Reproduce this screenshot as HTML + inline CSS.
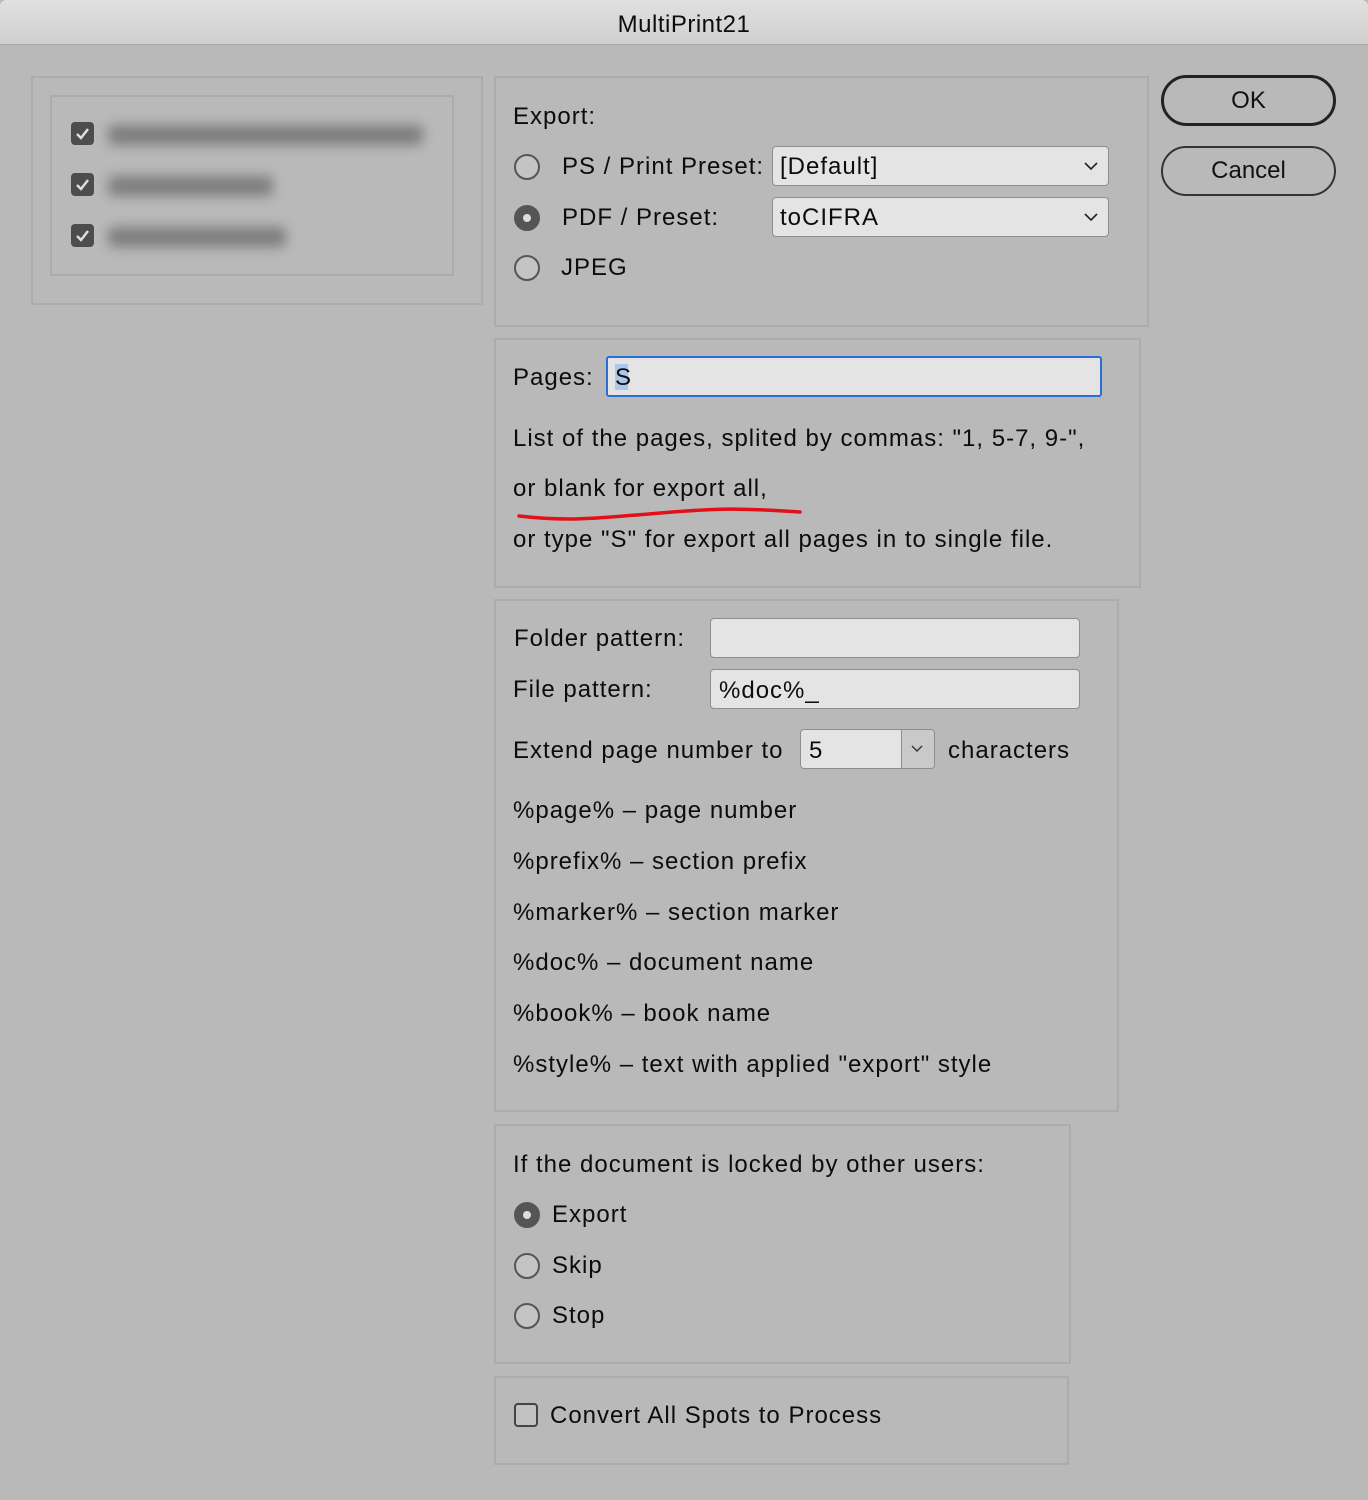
<!DOCTYPE html>
<html><head><meta charset="utf-8"><style>
*{margin:0;padding:0;box-sizing:border-box}
body{width:1368px;height:1500px;background:#b9b9b9;position:relative;overflow:hidden;font-family:"Liberation Sans",sans-serif;color:#111}
.p{position:absolute;border:2px solid #acacac}
.t{position:absolute;font-size:24px;line-height:26px;white-space:nowrap;letter-spacing:1px;color:#0c0c0c}
.in{position:absolute;background:#e4e4e4;border:1px solid #8e8e8e;border-radius:4px}
.r{position:absolute;width:26px;height:26px;border-radius:50%;border:2px solid #555;background:#c4c4c4}
.r.on{background:#555;border-color:#555}
.r.on::after{content:"";position:absolute;left:7px;top:7px;width:8px;height:8px;border-radius:50%;background:#ddd}
.cb{position:absolute;width:23px;height:23px;border-radius:4px;background:#4d4d4d}
.blur{position:absolute;height:20px;background:#6a6a6a;filter:blur(6px);opacity:.75;border-radius:6px}
.btn{position:absolute;border:3px solid #222;border-radius:26px;text-align:center;font-size:24px}
.ch{position:absolute}
</style></head><body>
<div style="position:absolute;left:0;top:0;width:1368px;height:45px;background:linear-gradient(#e0e0e0,#cfcfcf);border-bottom:1px solid #a8a8a8;border-radius:6px 6px 0 0"></div>
<div class="t" style="left:0;width:1368px;text-align:center;top:12px;font-size:24px;letter-spacing:0.5px">MultiPrint21</div>

<div class="p" style="left:31px;top:76px;width:452px;height:229px"></div>
<div class="p" style="left:50px;top:95px;width:404px;height:181px"></div>
<div class="cb" style="left:71px;top:122px"><svg width="23" height="23"><path d="M6 12l4 4 7-9" stroke="#ddd" stroke-width="2.5" fill="none"/></svg></div>
<div class="cb" style="left:71px;top:173px"><svg width="23" height="23"><path d="M6 12l4 4 7-9" stroke="#ddd" stroke-width="2.5" fill="none"/></svg></div>
<div class="cb" style="left:71px;top:224px"><svg width="23" height="23"><path d="M6 12l4 4 7-9" stroke="#ddd" stroke-width="2.5" fill="none"/></svg></div>
<div class="blur" style="left:108px;top:125px;width:315px"></div>
<div class="blur" style="left:108px;top:176px;width:165px"></div>
<div class="blur" style="left:108px;top:227px;width:178px"></div>

<div class="p" style="left:494px;top:76px;width:655px;height:251px"></div>
<div class="t" style="left:513px;top:104px">Export:</div>
<div class="r" style="left:514px;top:154px"></div>
<div class="t" style="left:562px;top:154px">PS / Print Preset:</div>
<div class="in" style="left:772px;top:146px;width:337px;height:40px"></div>
<div class="t" style="left:780px;top:154px">[Default]</div>
<svg class="ch" style="left:1084px;top:161px" width="14" height="10"><path d="M1 2l6 6 6-6" stroke="#222" stroke-width="1.6" fill="none"/></svg>
<div class="r on" style="left:514px;top:205px"></div>
<div class="t" style="left:562px;top:205px">PDF / Preset:</div>
<div class="in" style="left:772px;top:197px;width:337px;height:40px"></div>
<div class="t" style="left:780px;top:205px">toCIFRA</div>
<svg class="ch" style="left:1084px;top:212px" width="14" height="10"><path d="M1 2l6 6 6-6" stroke="#222" stroke-width="1.6" fill="none"/></svg>
<div class="r" style="left:514px;top:255px"></div>
<div class="t" style="left:561px;top:255px">JPEG</div>

<div class="btn" style="left:1161px;top:75px;width:175px;height:51px;line-height:45px">OK</div>
<div class="btn" style="left:1161px;top:146px;width:175px;height:50px;line-height:46px;border-width:2px;border-color:#333">Cancel</div>

<div class="p" style="left:494px;top:338px;width:647px;height:250px"></div>
<div class="t" style="left:513px;top:365px">Pages:</div>
<div class="in" style="left:606px;top:356px;width:496px;height:41px;border:2px solid #2a6ed8;border-radius:3px"></div>
<div style="position:absolute;left:615px;top:364px;width:13px;height:26px;background:#a9c8ee"></div>
<div class="t" style="left:615px;top:365px">S</div>
<div class="t" style="left:513px;top:426px">List of the pages, splited by commas: "1, 5-7, 9-",</div>
<div class="t" style="left:513px;top:476px">or blank for export all,</div>
<svg style="position:absolute;left:510px;top:500px" width="300" height="30"><path d="M9 16 C60 22 90 18 150 13 S230 8 290 12" stroke="#e3101a" stroke-width="3.5" fill="none" stroke-linecap="round"/></svg>
<div class="t" style="left:513px;top:527px">or type "S" for export all pages in to single file.</div>

<div class="p" style="left:494px;top:599px;width:625px;height:513px"></div>
<div class="t" style="left:514px;top:626px">Folder pattern:</div>
<div class="in" style="left:710px;top:618px;width:370px;height:40px"></div>
<div class="t" style="left:513px;top:677px">File pattern:</div>
<div class="in" style="left:710px;top:669px;width:370px;height:40px"></div>
<div class="t" style="left:719px;top:678px">%doc%_</div>
<div class="t" style="left:513px;top:738px">Extend page number to</div>
<div class="in" style="left:800px;top:729px;width:135px;height:40px;overflow:hidden"><div style="position:absolute;left:100px;top:0;width:35px;height:40px;background:#c9c9c9;border-left:1px solid #8e8e8e"></div></div>
<div class="t" style="left:809px;top:738px">5</div>
<svg class="ch" style="left:911px;top:745px" width="12" height="8"><path d="M1 1l5 5 5-5" stroke="#333" stroke-width="1.4" fill="none"/></svg>
<div class="t" style="left:948px;top:738px">characters</div>
<div class="t" style="left:513px;top:798px">%page% – page number</div>
<div class="t" style="left:513px;top:849px">%prefix% – section prefix</div>
<div class="t" style="left:513px;top:900px">%marker% – section marker</div>
<div class="t" style="left:513px;top:950px">%doc% – document name</div>
<div class="t" style="left:513px;top:1001px">%book% – book name</div>
<div class="t" style="left:513px;top:1052px">%style% – text with applied "export" style</div>

<div class="p" style="left:494px;top:1124px;width:577px;height:240px"></div>
<div class="t" style="left:513px;top:1152px">If the document is locked by other users:</div>
<div class="r on" style="left:514px;top:1202px"></div>
<div class="t" style="left:552px;top:1202px">Export</div>
<div class="r" style="left:514px;top:1253px"></div>
<div class="t" style="left:552px;top:1253px">Skip</div>
<div class="r" style="left:514px;top:1303px"></div>
<div class="t" style="left:552px;top:1303px">Stop</div>

<div class="p" style="left:494px;top:1376px;width:575px;height:89px"></div>
<div style="position:absolute;left:514px;top:1403px;width:24px;height:24px;border:2px solid #444;border-radius:4px;background:#c2c2c2"></div>
<div class="t" style="left:550px;top:1403px">Convert All Spots to Process</div>
</body></html>
